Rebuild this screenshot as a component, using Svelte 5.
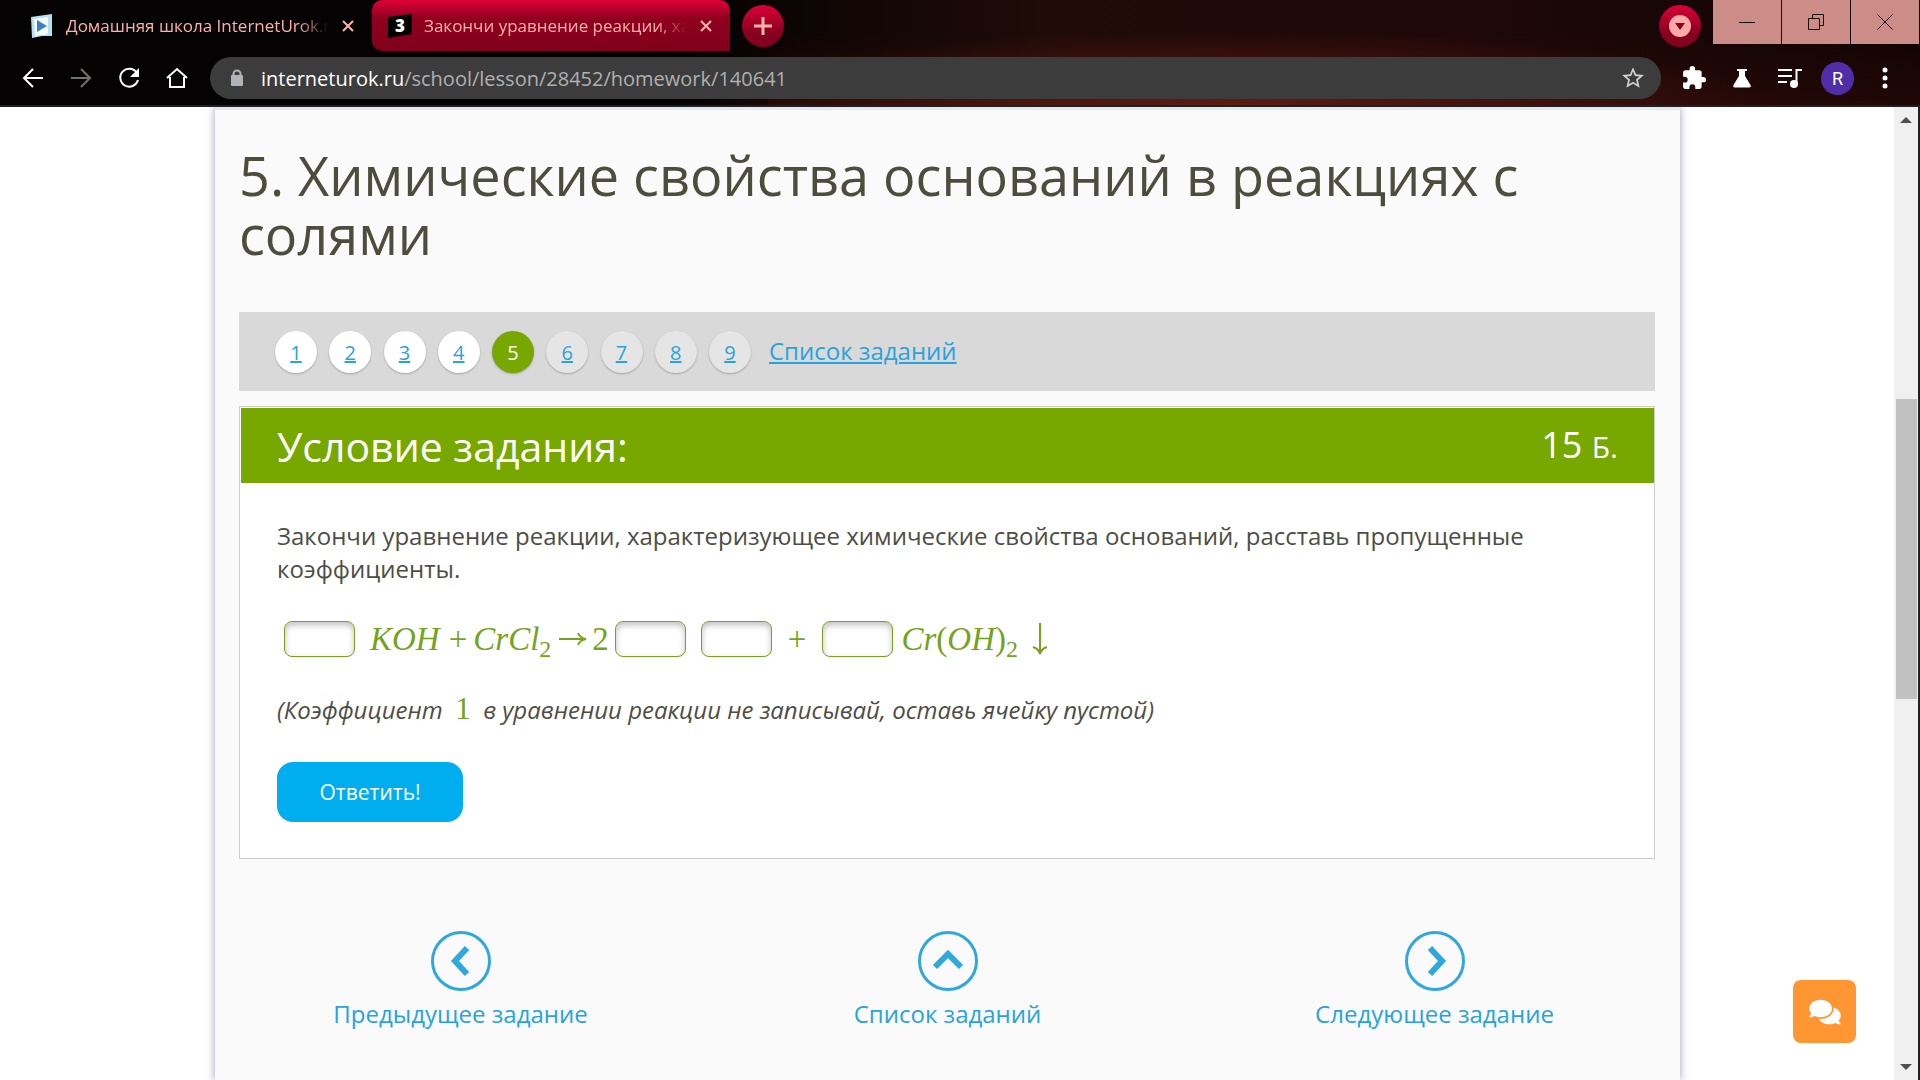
<script>
    const tasks = [
        { n: 1, state: 'open' },
        { n: 2, state: 'open' },
        { n: 3, state: 'open' },
        { n: 4, state: 'open' },
        { n: 5, state: 'current' },
        { n: 6, state: 'locked' },
        { n: 7, state: 'locked' },
        { n: 8, state: 'locked' },
        { n: 9, state: 'locked' },
    ];

    const directions = [
        { label: 'Предыдущее задание', points: '36,17 24,30 36,43' },
        { label: 'Список заданий', points: '17,36 30,23 43,36' },
        { label: 'Следующее задание', points: '25,17 37,30 25,43' },
    ];

    let answers = $state(['', '', '', '']);
</script>

{#snippet cell(i)}
    <input class="cell" type="text" aria-label="Коэффициент {i + 1}" bind:value={answers[i]} />
{/snippet}

<div class="window">
    <header class="chrome">
        <div class="tabs">
            <div class="tab">
                <svg class="favicon" viewBox="0 0 24 24">
                    <path d="M1 3 L22 0 V22 L12 22 L2 24 Z" fill="#b9dff2" />
                    <path d="M4 5 L18 3 V20 L5 22 Z" fill="#f4fbff" />
                    <path d="M7 6 L17 12 L7 18 Z" fill="#3f80c4" />
                </svg>
                <span class="tab-title">Домашняя школа InternetUrok.ru</span>
                <button class="tab-close" aria-label="Закрыть вкладку">
                    <svg width="14" height="14" viewBox="0 0 14 14"><path d="M2 2 L12 12 M12 2 L2 12" stroke="#ffb3ab" stroke-width="2" /></svg>
                </button>
            </div>
            <div class="tab active">
                <svg class="favicon" viewBox="0 0 24 24">
                    <path d="M0 3 L24 0 V20 L0 24 Z" fill="#000" />
                    <text x="12" y="18" text-anchor="middle" font-size="17" font-weight="800" fill="#fff">3</text>
                </svg>
                <span class="tab-title">Закончи уравнение реакции, характеризующее</span>
                <button class="tab-close" aria-label="Закрыть вкладку">
                    <svg width="14" height="14" viewBox="0 0 14 14"><path d="M2 2 L12 12 M12 2 L2 12" stroke="#ffb3ab" stroke-width="2" /></svg>
                </button>
            </div>
            <button class="round" aria-label="Новая вкладка">
                <svg width="20" height="20" viewBox="0 0 20 20"><path d="M10 1 V19 M1 10 H19" stroke="#ffb3ab" stroke-width="3" /></svg>
            </button>
            <div class="spacer"></div>
            <button class="round" aria-label="Поиск вкладок">
                <svg width="22" height="22" viewBox="0 0 22 22">
                    <circle cx="11" cy="11" r="11" fill="#ffaaa6" />
                    <path d="M6 8 H16 L11 15 Z" fill="#8c0020" />
                </svg>
            </button>
            <div class="controls">
                <button aria-label="Свернуть">
                    <svg width="16" height="16" viewBox="0 0 16 16"><path d="M0 8.5 H16" /></svg>
                </button>
                <button aria-label="Восстановить">
                    <svg width="16" height="16" viewBox="0 0 16 16"><path d="M0.5 4.5 H11.5 V15.5 H0.5 Z M4.5 4 V0.5 H15.5 V11.5 H12" /></svg>
                </button>
                <button aria-label="Закрыть">
                    <svg width="16" height="16" viewBox="0 0 16 16"><path d="M0.5 0.5 L15.5 15.5 M15.5 0.5 L0.5 15.5" /></svg>
                </button>
            </div>
        </div>

        <div class="toolbar">
            <div class="tools left">
                <button aria-label="Назад">
                    <svg width="24" height="24" viewBox="0 0 24 24"><path d="M22 12 H3 M12 3 L3 12 L12 21" class="line" /></svg>
                </button>
                <button class="dim" aria-label="Вперёд">
                    <svg width="24" height="24" viewBox="0 0 24 24"><path d="M2 12 H21 M12 3 L21 12 L12 21" class="line" /></svg>
                </button>
                <button aria-label="Обновить">
                    <svg width="24" height="24" viewBox="0 0 24 24">
                        <path d="M20 7 A9 9 0 1 0 21 14" class="line" />
                        <path d="M22 2 V11 H13 Z" fill="currentColor" />
                    </svg>
                </button>
                <button aria-label="Главная">
                    <svg width="24" height="24" viewBox="0 0 24 24"><path d="M2 12 L12 3 L22 12 M5 11 V21 H19 V11" class="line" /></svg>
                </button>
            </div>
            <div class="address">
                <svg width="14" height="18" viewBox="0 0 14 18">
                    <path d="M3.5 8 V5 A3.5 3.5 0 0 1 10.5 5 V8" fill="none" stroke="#b0b3b8" stroke-width="2" />
                    <rect x="1" y="6" width="12" height="11" rx="1" fill="#b0b3b8" />
                </svg>
                <span class="url">interneturok.ru<span class="path">/school/lesson/28452/homework/140641</span></span>
                <button class="star" aria-label="Добавить в закладки">
                    <svg width="26" height="26" viewBox="0 0 24 24"><path d="M22 9.24l-7.19-.62L12 2 9.19 8.63 2 9.24l5.46 4.73L5.82 21 12 17.27 18.18 21l-1.63-7.03L22 9.24zM12 15.4l-3.76 2.27 1-4.28-3.32-2.88 4.38-.38L12 6.1l1.71 4.04 4.38.38-3.32 2.88 1 4.28L12 15.4z" fill="#d0d0d0" /></svg>
                </button>
            </div>
            <div class="tools right">
                <button aria-label="Расширения">
                    <svg width="24" height="24" viewBox="1 1 22 22"><path d="M20.5 11H19V7c0-1.1-.9-2-2-2h-4V3.5a2.5 2.5 0 0 0-5 0V5H4c-1.1 0-2 .9-2 2v3.8h1.5a2.7 2.7 0 0 1 0 5.4H2V20c0 1.1.9 2 2 2h3.8v-1.5a2.7 2.7 0 0 1 5.4 0V22H17c1.1 0 2-.9 2-2v-4h1.5a2.5 2.5 0 0 0 0-5z" fill="currentColor" /></svg>
                </button>
                <button aria-label="Эксперименты">
                    <svg width="24" height="24" viewBox="0 0 24 24"><path d="M7 3 H17 V5 H15 V10 L20.5 19 Q21.5 21.5 19 21.5 H5 Q2.5 21.5 3.5 19 L9 10 V5 H7 Z" fill="currentColor" /></svg>
                </button>
                <button aria-label="Управление медиа">
                    <svg width="24" height="24" viewBox="0 0 24 24">
                        <path d="M0 4 H14 M0 10 H14 M0 16 H9 M18.5 18 V4 H24" class="line" />
                        <circle cx="16" cy="18" r="4" fill="currentColor" />
                    </svg>
                </button>
                <button class="avatar" aria-label="Профиль">R</button>
                <button aria-label="Меню">
                    <svg width="24" height="24" viewBox="0 0 24 24" fill="currentColor">
                        <circle cx="12" cy="4" r="2.5" /><circle cx="12" cy="12" r="2.5" /><circle cx="12" cy="20" r="2.5" />
                    </svg>
                </button>
            </div>
        </div>
    </header>

    <div class="viewport">
        <div class="page-area">
            <main class="page">
                <div class="content">
                    <h1>5. Химические свойства оснований в реакциях с солями</h1>

                    <nav class="pager">
                        <div class="nums">
                            {#each tasks as task}
                                {#if task.state === 'current'}
                                    <span class="num current">{task.n}</span>
                                {:else}
                                    <a class="num {task.state}" href="#task-{task.n}">{task.n}</a>
                                {/if}
                            {/each}
                        </div>
                        <a class="list-link" href="#list">Список заданий</a>
                    </nav>

                    <section class="task">
                        <div class="task-head">
                            <h2>Условие задания:</h2>
                            <div class="points">15 <small>Б.</small></div>
                        </div>
                        <div class="task-body">
                            <p>Закончи уравнение реакции, характеризующее химические свойства оснований, расставь пропущенные коэффициенты.</p>
                            <div class="equation">
                                {@render cell(0)}
                                <span class="term first"><i>KOH</i></span>
                                <span class="plus tight">+</span>
                                <span class="term"><i>CrCl</i><sub>2</sub></span>
                                <svg class="arrow" width="28" height="16" viewBox="0 0 28 16"><path d="M0 8 H26 M19 2 Q21 7 27 8 Q21 9 19 14" /></svg>
                                <span class="term factor">2</span>
                                {@render cell(1)}
                                {@render cell(2)}
                                <span class="plus">+</span>
                                {@render cell(3)}
                                <span class="term"><i>Cr</i>(<i>OH</i>)<sub>2</sub></span>
                                <svg class="down" width="16" height="32" viewBox="0 0 16 32"><path d="M8 0 V31 M1 24 Q7 26 8 31 Q9 26 15 24" /></svg>
                            </div>
                            <p class="note">(Коэффициент <span class="one">1</span> в уравнении реакции не записывай, оставь ячейку пустой)</p>
                            <button class="submit">Ответить!</button>
                        </div>
                    </section>
                </div>

                <nav class="directions">
                    {#each directions as item}
                        <a href="#go">
                            <svg width="60" height="60" viewBox="0 0 60 60">
                                <circle cx="30" cy="30" r="28.5" stroke-width="3" />
                                <polyline points={item.points} stroke-width="6" />
                            </svg>
                            {item.label}
                        </a>
                    {/each}
                </nav>
            </main>
        </div>

        <div class="scrollbar">
            <svg width="12" height="6" viewBox="0 0 12 6"><path d="M0 6 L6 0 L12 6 Z" fill="#505050" /></svg>
            <div class="track"><div class="thumb"></div></div>
            <svg width="12" height="6" viewBox="0 0 12 6"><path d="M0 0 L6 6 L12 0 Z" fill="#505050" /></svg>
        </div>
    </div>

    <button class="chat" aria-label="Чат">
        <svg width="32" height="28" viewBox="0 0 576 512"><path fill="#fff" d="M416 192c0-88.4-93.1-160-208-160S0 103.6 0 192c0 34.3 14.1 65.9 38 92-13.4 30.2-35.5 54.2-35.8 54.5-2.2 2.3-2.8 5.7-1.5 8.7S4.8 352 8 352c36.6 0 66.9-12.3 88.7-25 32.2 15.7 70.3 25 111.3 25 114.9 0 208-71.6 208-160zm122 220c23.9-26 38-57.7 38-92 0-66.9-53.5-124.2-129.3-148.1.9 6.6 1.3 13.3 1.3 20.1 0 105.9-107.7 192-240 192-10.8 0-21.3-.8-31.7-1.9C207.8 439.6 281.8 480 368 480c41 0 79.1-9.2 111.3-25 21.8 12.7 52.1 25 88.7 25 3.2 0 6.1-1.9 7.3-4.8 1.3-2.9.7-6.3-1.5-8.7-.3-.3-22.4-24.2-35.8-54.5z" /></svg>
    </button>
</div>

<style>
    :global(body) {
        margin: 0;
    }

    .window {
        display: flex;
        flex-direction: column;
        min-height: 100vh;
        font-family: "Open Sans", sans-serif;
        color: #4d4d47;
    }

    button {
        display: flex;
        align-items: center;
        justify-content: center;
        padding: 0;
        border: 0;
        background: none;
        color: inherit;
        font-family: inherit;
        cursor: pointer;
    }

    svg {
        flex: none;
    }

    /* browser frame */
    .chrome {
        height: 105px;
        border-bottom: 2px solid #202124;
        background:
            radial-gradient(ellipse 28% 70% at 64% 100%, #5c1c10, transparent),
            linear-gradient(transparent 30%, rgba(70, 15, 10, 0.3)) right / 60% 100% no-repeat,
            linear-gradient(90deg, #040202 35%, #200b08 55%, #200808 75%, #100404);
        color: #fff;
    }

    .tabs {
        display: flex;
        align-items: flex-start;
        height: 51px;
    }

    .tab {
        display: flex;
        align-items: center;
        box-sizing: border-box;
        width: 358px;
        height: 51px;
        padding: 0 15px 0 16px;
        color: #ffb0a8;
        font-family: "Open Sans", sans-serif;
        font-size: 17px;
    }

    .tab:first-child {
        margin-left: 14px;
    }

    .tab.active {
        border-radius: 10px 10px 0 10px;
        background: linear-gradient(#e00038, #90001f 35%, #80001c);
    }

    .favicon {
        width: 24px;
        height: 24px;
        margin-right: 12px;
    }

    .tab-title {
        flex: 1;
        overflow: hidden;
        white-space: nowrap;
        mask-image: linear-gradient(90deg, #000 88%, transparent);
    }

    .tab-close {
        width: 18px;
        margin-left: 10px;
    }

    .round {
        width: 42px;
        height: 42px;
        margin: 5px 12px 0;
        border-radius: 50%;
        background: linear-gradient(#dc0036, #84001e 70%);
    }

    .spacer {
        flex: 1;
    }

    .controls {
        display: flex;
        gap: 1px;
        margin-right: 1px;
    }

    .controls button {
        width: 68px;
        height: 44px;
        background: #cc8c88;
    }

    .controls path {
        fill: none;
        stroke: #1a0808;
    }

    .toolbar {
        display: flex;
        align-items: center;
        height: 42px;
        padding-top: 6px;
    }

    .tools {
        display: flex;
        align-items: center;
        gap: 24px;
    }

    .tools.left {
        width: 189px;
        padding-left: 21px;
    }

    .tools.right {
        width: 238px;
        padding-left: 21px;
    }

    .line {
        fill: none;
        stroke: currentColor;
        stroke-width: 2;
    }

    .dim {
        color: #77706f;
    }

    .tools.right .avatar {
        width: 33px;
        height: 33px;
        margin: 0 -5px;
        border-radius: 50%;
        background: #512da8;
        font-family: Roboto, sans-serif;
        font-size: 18px;
    }

    .address {
        display: flex;
        align-items: center;
        flex: 1;
        box-sizing: border-box;
        height: 42px;
        padding: 0 15px 0 20px;
        border-radius: 21px;
        background: #3c3c3c;
    }

    .url {
        flex: 1;
        margin-left: 17px;
        font-family: "Open Sans", sans-serif;
        font-size: 20px;
    }

    .path {
        color: #b0b0b0;
    }

    /* page */
    .viewport {
        display: flex;
        flex: 1;
        border-right: 2px solid #202124;
        background: #fff;
    }

    .page-area {
        flex: 1;
        overflow: hidden;
        padding: 0 214px 0 215px;
    }

    .page {
        box-sizing: border-box;
        height: 100%;
        border-top: 3px solid #e3e9f0;
        background: #fafafa;
        box-shadow: 0 0 8px rgba(60, 60, 100, 0.5);
    }

    .content {
        padding: 36px 25px 0 24px;
    }

    h1 {
        margin: 0;
        color: #4d4d3d;
        font-size: 54px;
        font-weight: 400;
        line-height: 59px;
    }

    a {
        color: #29a3dc;
    }

    .pager {
        display: flex;
        align-items: center;
        gap: 18px;
        height: 79px;
        margin-top: 48px;
        padding-left: 36px;
        background: #d9d9d9;
    }

    .nums {
        display: flex;
        justify-content: space-between;
        width: 476px;
    }

    .num {
        width: 42px;
        height: 42px;
        border-radius: 50%;
        background: #fff;
        box-shadow: 0 1px 2px rgba(0, 0, 0, 0.25);
        font-size: 20px;
        line-height: 44px;
        text-align: center;
    }

    .num.current {
        background: #76a800;
        color: #fff;
    }

    .num.locked {
        background: #e5e5e5;
    }

    .list-link {
        padding-bottom: 2px;
        font-size: 24px;
    }

    .task {
        margin-top: 15px;
        padding: 1px 0 0 1px;
        border: 1px solid #ccc;
        background: #fff;
    }

    .task-head {
        display: flex;
        align-items: center;
        justify-content: space-between;
        height: 75px;
        padding: 0 36px;
        background: #76a800;
        color: #fff;
    }

    h2 {
        margin: 0;
        font-size: 41px;
        font-weight: 400;
    }

    .points {
        padding-bottom: 2px;
        font-size: 36px;
    }

    .points small {
        font-size: 30px;
    }

    .task-body {
        padding: 36px;
    }

    p {
        margin: 0;
        font-size: 24px;
        line-height: 33px;
    }

    .equation {
        display: flex;
        align-items: center;
        gap: 8px;
        height: 36px;
        margin: 36px 0 35px 7px;
        color: #76a21e;
        font-family: "Liberation Serif", serif;
        font-size: 33px;
    }

    .cell {
        box-sizing: border-box;
        width: 71px;
        height: 36px;
        border: 1px solid #76a21e;
        border-radius: 8px;
        background: #fff;
        box-shadow: inset 0 3px 6px rgba(0, 0, 0, 0.25);
        text-align: center;
    }

    .cell + .cell {
        margin-left: 7px;
    }

    .term.first {
        margin-left: 7px;
    }

    .term.factor {
        margin: 0 -2px 0 -3px;
    }

    .plus {
        margin: 0 8px;
    }

    .plus.tight {
        margin: 0 -2px 0 1px;
    }

    sub {
        font-size: 24px;
        line-height: 0;
        vertical-align: -7px;
    }

    .arrow,
    .down {
        fill: none;
        stroke: #76a21e;
        stroke-width: 2;
    }

    .down {
        margin-left: 6px;
    }

    .note {
        font-style: italic;
    }

    .one {
        margin: 0 6px;
        color: #76a21e;
        font: 32px/33px "Liberation Serif", serif;
    }

    .submit {
        width: 186px;
        height: 60px;
        margin-top: 36px;
        border-radius: 16px;
        background: #00aeef;
        color: #fff;
        font-size: 21px;
    }

    .directions {
        display: grid;
        grid-template-columns: repeat(3, 1fr);
        padding: 72px 2px 0;
    }

    .directions a {
        display: flex;
        flex-direction: column;
        align-items: center;
        gap: 6px;
        font-size: 24px;
        line-height: 33px;
        text-decoration: none;
    }

    .directions svg {
        fill: none;
        stroke: #31a8dc;
    }

    .scrollbar {
        display: flex;
        flex-direction: column;
        align-items: center;
        width: 24px;
        padding: 10px 0;
        box-sizing: border-box;
        background: #f0f0f0;
    }

    .track {
        flex: 1;
        width: 21px;
        margin: 10px 0;
    }

    .thumb {
        height: 300px;
        margin-top: 266px;
        background: #c1c1c1;
    }

    .chat {
        position: fixed;
        right: 64px;
        bottom: 37px;
        width: 63px;
        height: 63px;
        border-radius: 8px;
        background: #ff9632;
    }
</style>
